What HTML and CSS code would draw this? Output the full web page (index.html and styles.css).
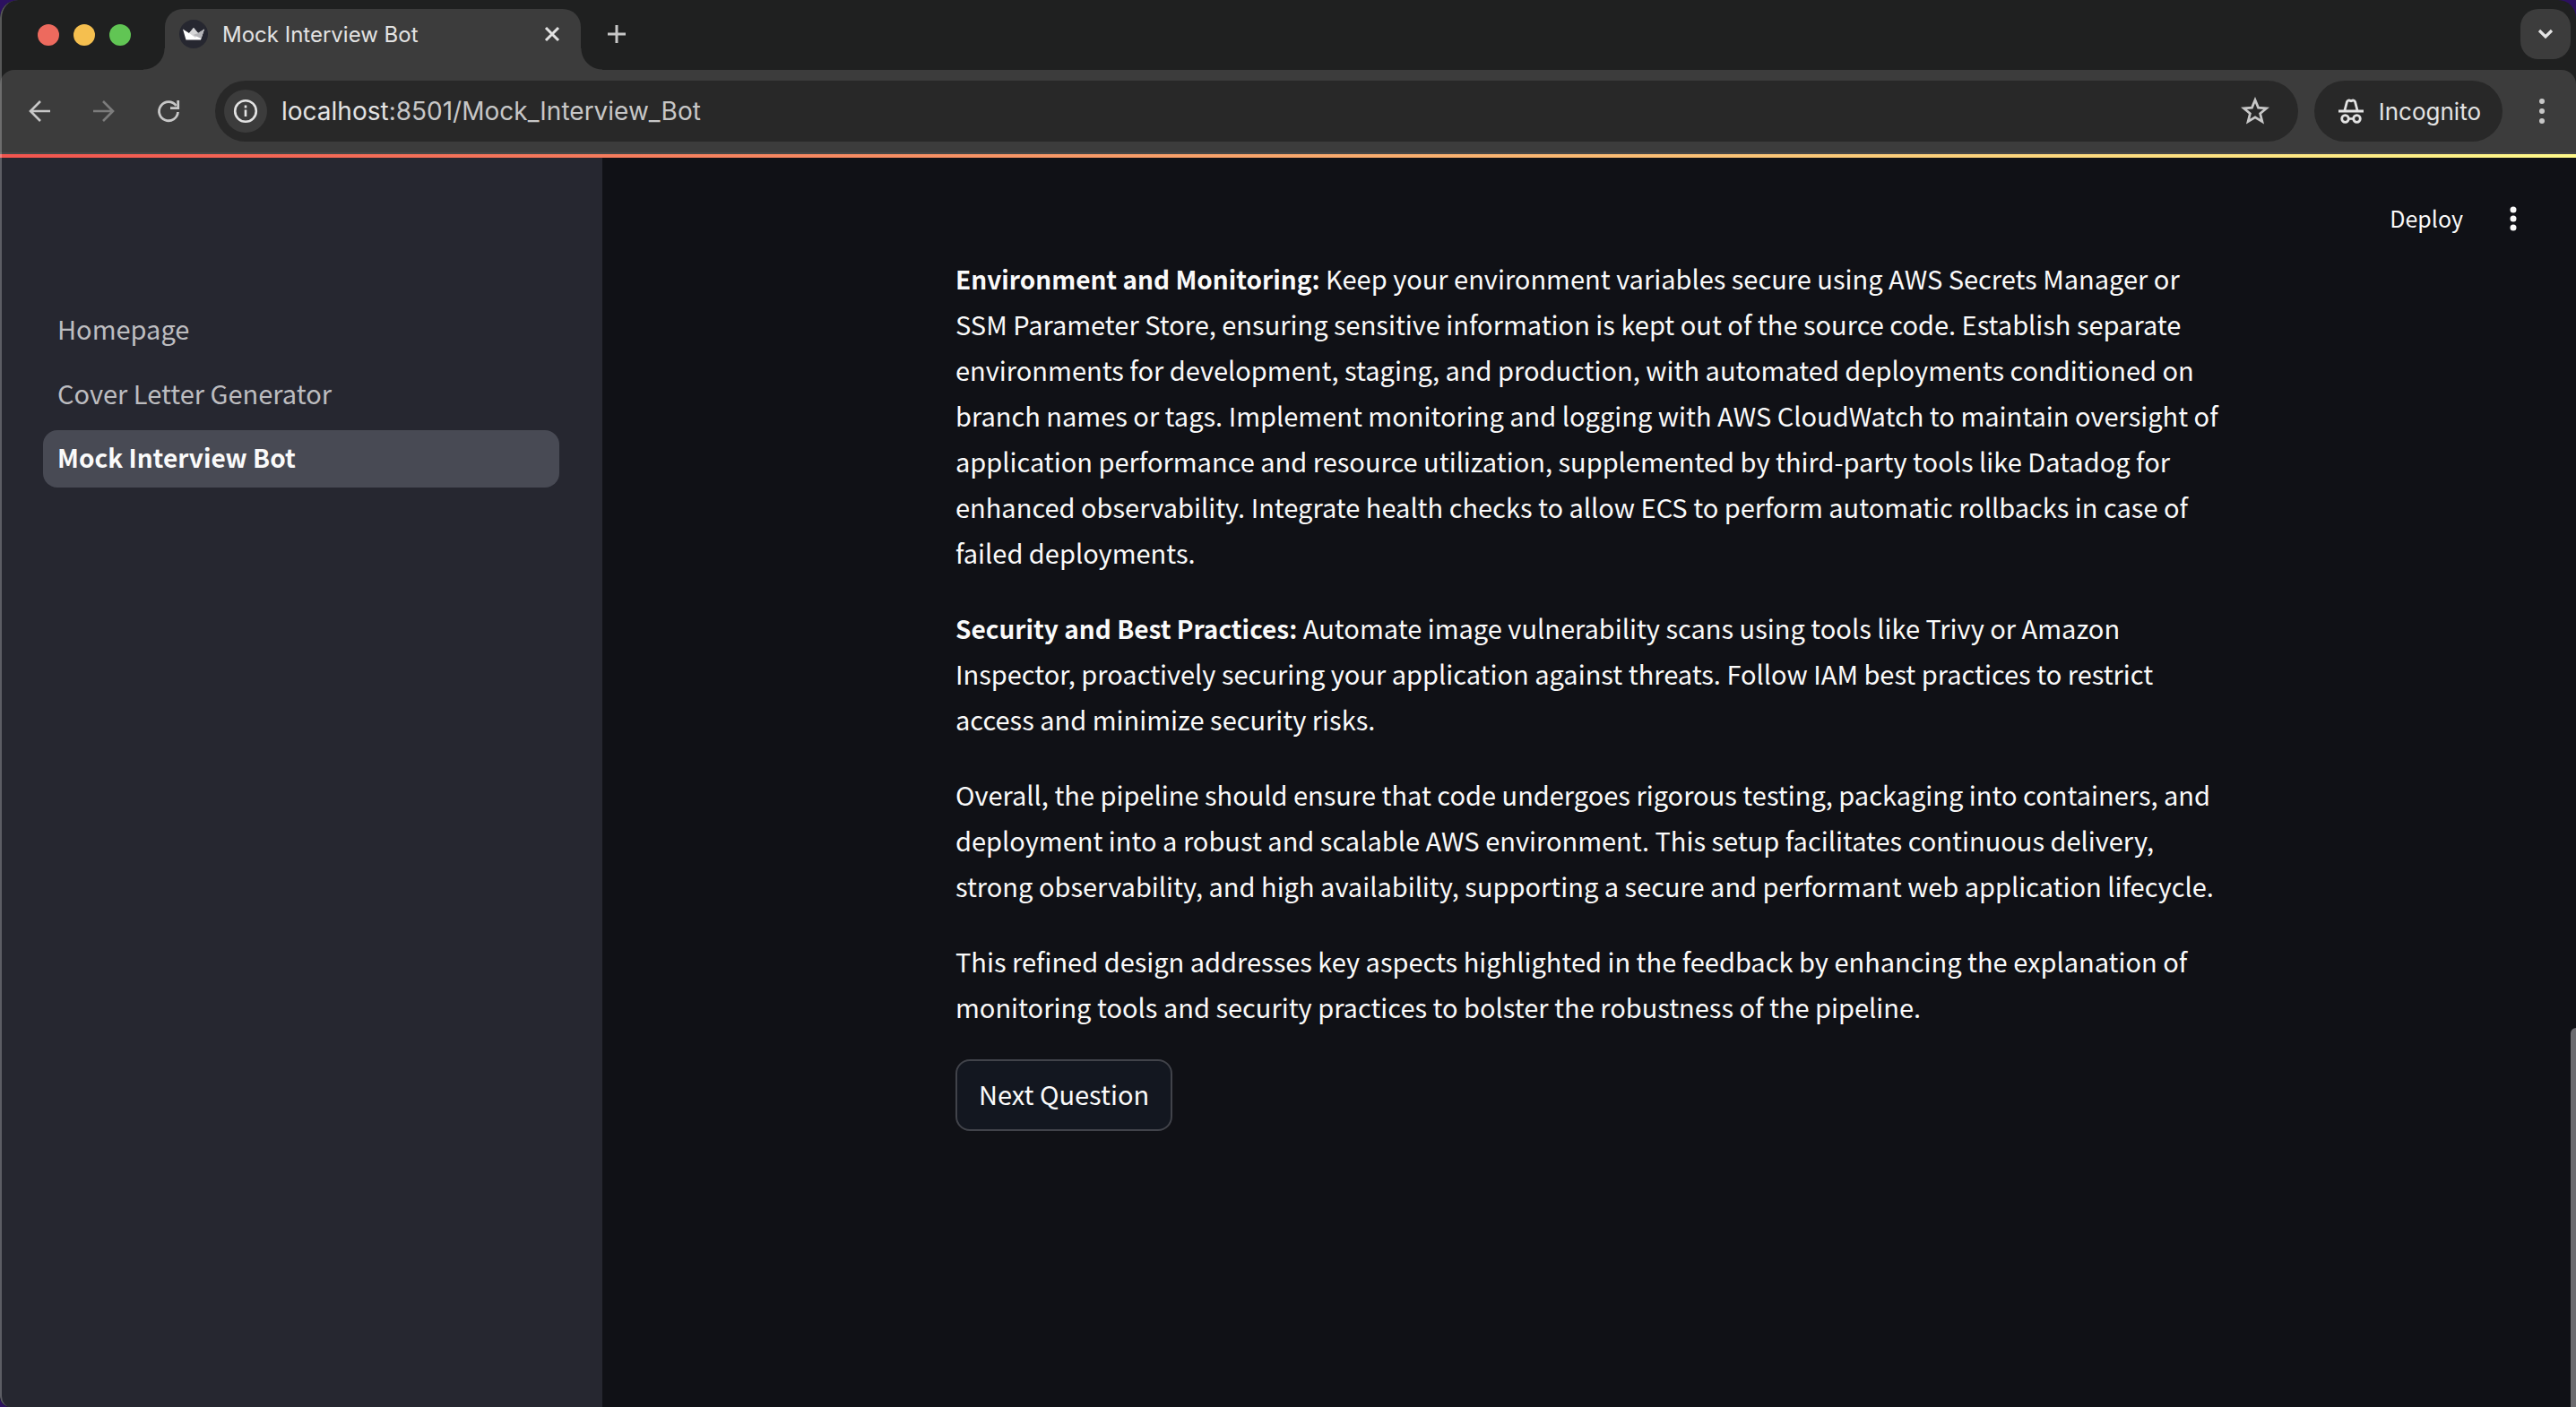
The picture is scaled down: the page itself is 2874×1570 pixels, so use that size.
FILE: index.html
```html
<!DOCTYPE html>
<html lang="en">
<head>
<meta charset="utf-8">
<title>Mock Interview Bot</title>
<link rel="stylesheet" href="styles.css">
</head>
<body>
<div class="window">
  <header class="tabstrip">
    <div class="lights"><span class="light light-red"></span><span class="light light-yellow"></span><span class="light light-green"></span></div>
    <div class="tab">
      <svg class="favicon" viewBox="0 0 32 32" aria-hidden="true"><circle cx="16" cy="16" r="16" fill="#262730"/><path d="M4 10.500l7 4.500 5-6 5 6 7-4.500-4 12H7.500z" fill="#fff"/><path d="M16 9l5 6-3 5-7-5z" fill="#d5d5d7"/><path d="M28 10.500l-3.500 10.500-9-4 5.500-2z" fill="#b4b4b8"/></svg>
      <span class="tab-title">Mock Interview Bot</span>
      <button class="icon-button" aria-label="Close tab"><svg width="20" height="20" viewBox="0 0 20 20"><path d="M3 3l14 14M17 3L3 17" stroke="#e3e3e3" stroke-width="3" fill="none"/></svg></button>
    </div>
    <button class="icon-button new-tab" aria-label="New tab"><svg width="20" height="20" viewBox="0 0 20 20"><path d="M10 0v20M0 10h20" stroke="#c7c7c7" stroke-width="3"/></svg></button>
    <button class="icon-button tab-search" aria-label="Search tabs"><svg width="20" height="20" viewBox="0 0 20 20"><path d="M3 6l7 7 7-7" stroke="#e3e3e3" stroke-width="3.200" fill="none"/></svg></button>
  </header>
  <nav class="toolbar" aria-label="Browser">
    <div class="history">
      <button class="icon-button" aria-label="Back"><svg width="28" height="28" viewBox="0 0 28 28"><path d="M26 14H4M15 3L4 14l11 11" stroke="#c7c7c7" stroke-width="2.600" fill="none"/></svg></button>
      <button class="icon-button" aria-label="Forward"><svg width="28" height="28" viewBox="0 0 28 28"><path d="M2 14h22M13 3l11 11-11 11" stroke="#7c7c7c" stroke-width="2.600" fill="none"/></svg></button>
      <button class="icon-button" aria-label="Reload"><svg width="28" height="28" viewBox="0 0 28 28"><path d="M24.500 15A10.500 10.500 0 1 1 22.500 8" stroke="#c7c7c7" stroke-width="2.800" fill="none"/><path d="M24.700 2v8.700H16" stroke="#c7c7c7" stroke-width="2.800" fill="none"/></svg></button>
    </div>
    <div class="address">
      <button class="icon-button site-info" aria-label="Site information"><svg width="28" height="28" viewBox="0 0 28 28"><circle cx="14" cy="14" r="11.800" stroke="#e3e3e3" stroke-width="2.600" fill="none"/><path d="M14 12.500v7.500M14 7.500v3" stroke="#e3e3e3" stroke-width="2.600"/></svg></button>
      <span class="url"><span class="host">localhost</span>:8501/Mock_Interview_Bot</span>
      <button class="icon-button" aria-label="Bookmark"><svg width="32" height="32" viewBox="0 0 32 32"><path d="M16 3.500l3.500 8.600 9.200.7-7.100 5.900 2.300 9L16 22.800l-7.900 4.900 2.300-9-7.100-5.900 9.200-.7z" stroke="#c7c7c7" stroke-width="2.700" fill="none"/></svg></button>
    </div>
    <button class="incognito"><svg width="30" height="30" viewBox="0 0 30 30"><path d="M1 15h28M8 14l2.500-9.500q1-2.500 4.500-.8 3.500-1.700 4.500.8L22 14" stroke="#e3e3e3" stroke-width="2.800" fill="none"/><circle cx="8.500" cy="23.500" r="3.800" stroke="#e3e3e3" stroke-width="2.800" fill="none"/><circle cx="21.500" cy="23.500" r="3.800" stroke="#e3e3e3" stroke-width="2.800" fill="none"/><path d="M12 23.500h6" stroke="#e3e3e3" stroke-width="2.600" fill="none"/></svg>Incognito</button>
    <button class="icon-button" aria-label="Browser menu"><svg width="28" height="28" viewBox="0 0 28 28" fill="#c7c7c7"><circle cx="14" cy="3" r="3"/><circle cx="14" cy="14" r="3"/><circle cx="14" cy="25" r="3"/></svg></button>
  </nav>
  <div class="decoration"></div>
  <div class="app">
    <aside class="sidebar">
      <nav class="pages" aria-label="Pages">
        <a class="page-link" href="#home">Homepage</a>
        <a class="page-link" href="#cover">Cover Letter Generator</a>
        <a class="page-link page-link-active" href="#mock" aria-current="page">Mock Interview Bot</a>
      </nav>
    </aside>
    <main class="main">
      <div class="app-header">
        <button class="deploy">Deploy</button>
        <button class="icon-button" aria-label="App menu"><svg width="28" height="28" viewBox="0 0 28 28" fill="#fafafa"><circle cx="14" cy="4" r="3.500"/><circle cx="14" cy="14" r="3.500"/><circle cx="14" cy="24" r="3.500"/></svg></button>
      </div>
      <article class="answer">
        <p><strong>Environment and Monitoring:</strong> Keep your environment variables secure using AWS Secrets Manager or SSM Parameter Store, ensuring sensitive information is kept out of the source code. Establish separate environments for development, staging, and production, with automated deployments conditioned on branch names or tags. Implement monitoring and logging with AWS CloudWatch to maintain oversight of application performance and resource utilization, supplemented by third-party tools like Datadog for enhanced observability. Integrate health checks to allow ECS to perform automatic rollbacks in case of failed deployments.</p>
        <p><strong>Security and Best Practices:</strong> Automate image vulnerability scans using tools like Trivy or Amazon Inspector, proactively securing your application against threats. Follow IAM best practices to restrict access and minimize security risks.</p>
        <p>Overall, the pipeline should ensure that code undergoes rigorous testing, packaging into containers, and deployment into a robust and scalable AWS environment. This setup facilitates continuous delivery, strong observability, and high availability, supporting a secure and performant web application lifecycle.</p>
        <p>This refined design addresses key aspects highlighted in the feedback by enhancing the explanation of monitoring tools and security practices to bolster the robustness of the pipeline.</p>
        <button class="next">Next Question</button>
      </article>
      <div class="scroll-thumb"></div>
    </main>
  </div>
</div>
</body>
</html>
```
FILE: styles.css
```css
* { box-sizing: border-box; }
body { margin: 0; background: #2c1160; }
button { border: 0; padding: 0; background: none; font: inherit; color: inherit; }

.window {
  position: relative;
  display: flex;
  flex-direction: column;
  min-height: 100vh;
  overflow: hidden;
  border-radius: 20px 20px 0 12px;
  background: #1f2020;
  font-family: Inter, "Liberation Sans", sans-serif;
}
/* thin light edge of the desktop window */
.window::after {
  content: "";
  position: absolute;
  inset: 0;
  border-left: 2px solid rgba(255, 255, 255, 0.25);
  border-radius: 20px 20px 0 12px;
  pointer-events: none;
}
.icon-button { display: grid; place-items: center; flex: none; }

.tabstrip { display: flex; height: 78px; padding: 10px 6px 0 42px; }
.lights { display: flex; gap: 16px; padding-top: 17px; margin-right: 38px; }
.light { width: 24px; height: 24px; border-radius: 50%; }
.light-red { background: #ed6a5e; }
.light-yellow { background: #f5bf4f; }
.light-green { background: #61c554; }
.tab {
  position: relative;
  display: flex;
  align-items: center;
  width: 464px;
  padding: 0 22px 12px 16px;
  border-radius: 20px 20px 0 0;
  background: #3c3c3c;
  color: #e3e3e3;
}
/* flared feet where the tab meets the toolbar */
.tab::before, .tab::after {
  content: "";
  position: absolute;
  bottom: 0;
  width: 24px;
  height: 24px;
}
.tab::before { left: -24px; background: radial-gradient(circle at 0 0, transparent 23px, #3c3c3c 24px); }
.tab::after { right: -24px; background: radial-gradient(circle at 100% 0, transparent 23px, #3c3c3c 24px); }
.favicon { width: 32px; height: 32px; margin-right: 16px; }
.tab-title { flex: 1; font-size: 24px; }
.new-tab { width: 56px; height: 56px; margin-left: 12px; }
.tab-search { width: 56px; height: 56px; margin-left: auto; border-radius: 20px; background: #3c3c3c; }

.toolbar {
  display: flex;
  align-items: center;
  height: 94px;
  padding: 0 24px 0 30px;
  border-bottom: 2px solid #464646;
  border-radius: 16px 16px 0 0;
  background: #3c3c3c;
}
.history { display: flex; gap: 44px; margin-right: 38px; }
.address {
  display: flex;
  flex: 1;
  align-items: center;
  height: 68px;
  margin-right: 18px;
  padding: 0 32px 0 10px;
  border-radius: 34px;
  background: #282828;
}
.site-info { width: 48px; height: 48px; margin-right: 16px; border-radius: 50%; background: #3c3c3c; }
.url { flex: 1; font-size: 28px; color: #c7c7c7; }
.host { color: #e3e3e3; }
.incognito {
  display: flex;
  align-items: center;
  gap: 16px;
  height: 68px;
  margin-right: 30px;
  padding: 0 24px 0 26px;
  border-radius: 34px;
  background: #282828;
  font-size: 26px;
  color: #e3e3e3;
}
.decoration { height: 4px; background: linear-gradient(90deg, #f2554f, #fff98a); }

.app {
  display: flex;
  flex: 1;
  background: #101116;
  font-family: "Noto Sans CJK SC", "Noto Sans", sans-serif;
  font-size: 29px;
  line-height: 51px;
  color: #fafafa;
}
.sidebar { flex: none; width: 672px; padding: 160px 48px 48px; background: #262730; }
.pages { display: flex; flex-direction: column; gap: 8px; }
.page-link {
  height: 64px;
  padding: 0 16px;
  border-radius: 16px;
  line-height: 60px;
  color: #bdbdc0;
  text-decoration: none;
}
.page-link-active { background: #484a54; color: #fafafa; font-size: 28px; font-weight: 700; }

.main { position: relative; flex: 1; padding-left: 6px; }
.app-header {
  display: flex;
  justify-content: flex-end;
  align-items: center;
  gap: 42px;
  height: 109px;
  padding: 27px 56px 0 0;
}
.deploy { font-size: 25px; line-height: 40px; padding-bottom: 2px; }
.answer {
  display: flex;
  flex-direction: column;
  align-items: flex-start;
  gap: 33px;
  max-width: 1420px;
  margin: 0 auto;
}
.answer p { margin: 0; }
.answer strong { font-size: 28px; line-height: 40px; }
.next {
  height: 80px;
  padding: 0 24px 4px;
  border: 2px solid #41434a;
  border-radius: 16px;
  background: #131720;
}
.scroll-thumb {
  position: absolute;
  right: 0;
  bottom: 0;
  width: 6px;
  height: 423px;
  border-radius: 6px 0 0 0;
  background: #6b6b6f;
}
```
